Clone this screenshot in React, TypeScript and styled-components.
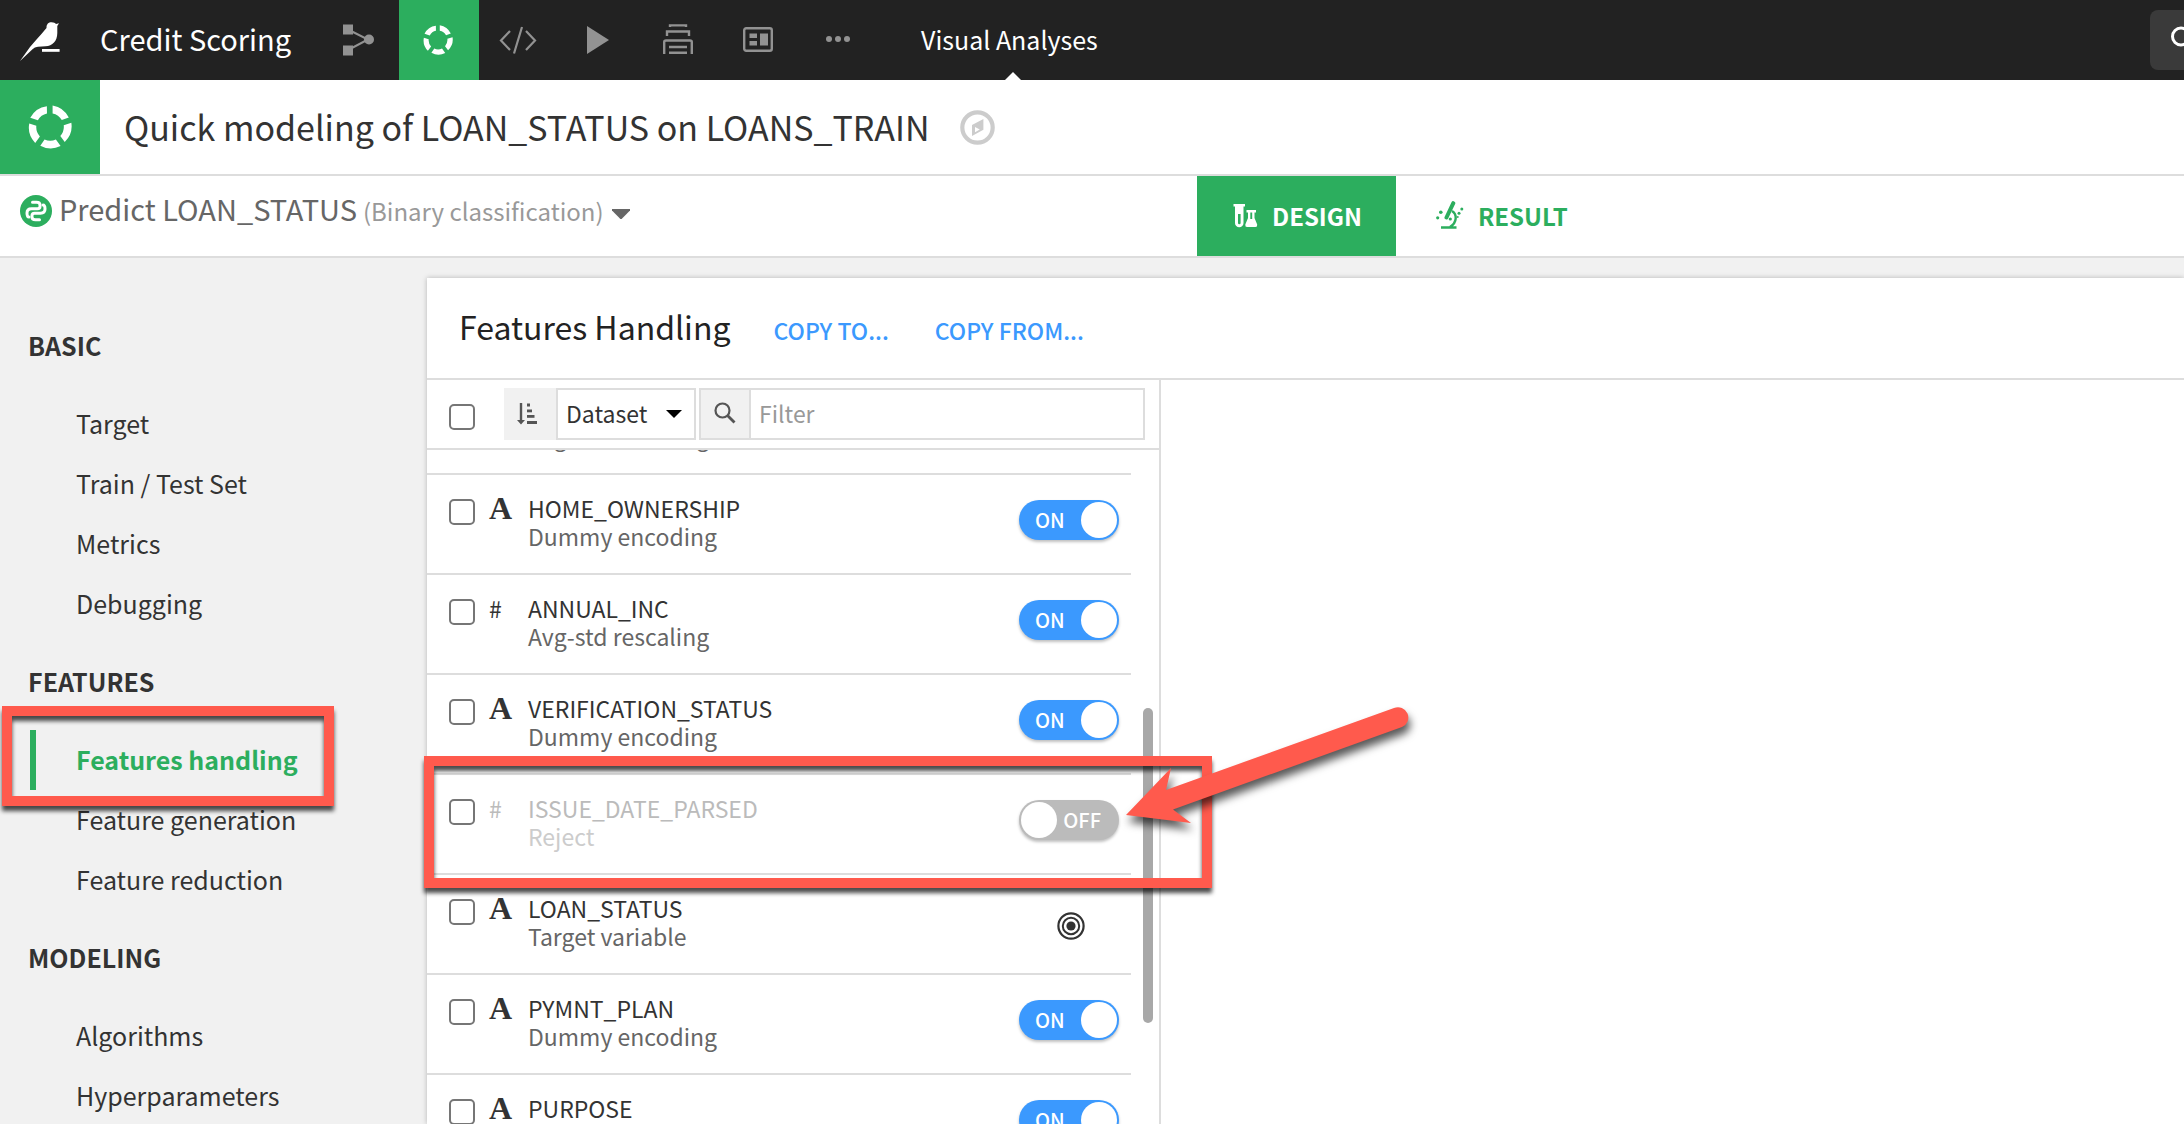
import React from "react";
import styled, { createGlobalStyle } from "styled-components";

const green = "#2cae5e";
const blue = "#3b99fe";
const line = "#dddddd";
const red = "#ff5a4d";

const GlobalStyle = createGlobalStyle`
  *, *::before, *::after { box-sizing: border-box; }
  body {
    margin: 0;
    background: #f1f1f1;
    color: #333;
    font-family: "Noto Sans CJK SC", "Source Sans Pro", sans-serif;
    font-size: 25px;
  }
  button, input, select { font: inherit; color: inherit; margin: 0; }
  h1, h2, h3, ul { margin: 0; padding: 0; font-weight: 400; list-style: none; }
`;

const Page = styled.div`
  position: relative;
  display: flex;
  flex-direction: column;
  height: 100vh;
  overflow: hidden;
`;

/* ---------- top bar ---------- */

const TopBar = styled.header`
  flex: none;
  display: flex;
  align-items: stretch;
  height: 80px;
  background: #222;
  color: #fff;
`;

const HomeLink = styled.a`
  display: flex;
  align-items: center;
  width: 100px;
  padding: 0 18px;
`;

const ProjectLink = styled.a`
  display: flex;
  align-items: center;
  width: 219px;
  padding-bottom: 4px;
  color: #fff;
  font-size: 29px;
  text-decoration: none;
  white-space: nowrap;
`;

const NavButton = styled.button<{ $active?: boolean }>`
  display: flex;
  align-items: center;
  justify-content: center;
  width: 80px;
  padding: 0 2px 0 0;
  border: 0;
  background: ${(p) => (p.$active ? green : "transparent")};
  color: ${(p) => (p.$active ? "#fff" : "#929292")};
`;

const SectionLink = styled.a`
  position: relative;
  display: flex;
  align-items: center;
  margin-left: 42px;
  padding-bottom: 2px;
  color: #fff;
  text-decoration: none;
  white-space: nowrap;
  &::after {
    content: "";
    position: absolute;
    left: 50%;
    bottom: 0;
    margin-left: -4px;
    border: 8px solid transparent;
    border-top: 0;
    border-bottom-color: #fff;
  }
`;

const SearchButton = styled.button`
  display: flex;
  align-items: center;
  align-self: center;
  width: 34px;
  height: 60px;
  margin-left: auto;
  padding: 0 0 0 20px;
  border: 0;
  border-radius: 8px 0 0 8px;
  background: #3a3a3a;
  overflow: hidden;
  svg { flex: none; }
`;

/* ---------- title and tabs ---------- */

const TitleBar = styled.div`
  flex: none;
  display: flex;
  align-items: center;
  height: 96px;
  border-bottom: 2px solid ${line};
  background: #fff;
`;

const TitleBadge = styled.div`
  display: flex;
  align-items: center;
  justify-content: center;
  align-self: stretch;
  width: 100px;
  margin-right: 24px;
  background: ${green};
  color: #fff;
`;

const Title = styled.h1`
  margin-right: 30px;
  font-size: 34px;
  line-height: 48px;
  white-space: nowrap;
`;

const IconButton = styled.button`
  display: flex;
  padding: 0;
  border: 0;
  background: none;
`;

const TabBar = styled.div`
  flex: none;
  display: flex;
  height: 82px;
  border-bottom: 2px solid ${line};
  background: #fff;
`;

const TaskArea = styled.div`
  flex: none;
  width: 1197px;
  padding-left: 20px;
`;

const TaskButton = styled.button`
  display: flex;
  align-items: center;
  height: 66px;
  padding: 0;
  border: 0;
  background: none;
  color: #666;
  font-size: 29px;
  line-height: 40px;
  white-space: nowrap;
`;

const TaskIcon = styled.span`
  display: flex;
  margin-right: 7px;
  padding-top: 4px;
`;

const TaskKind = styled.span`
  margin: 0 8px 0 6px;
  color: #999;
  font-size: 24px;
`;

const TaskCaret = styled.span`
  display: flex;
  padding-top: 10px;
`;

const Tab = styled.button<{ $active?: boolean }>`
  display: flex;
  align-items: center;
  gap: 14px;
  padding: 0 34px 2px 36px;
  border: 0;
  background: ${(p) => (p.$active ? green : "transparent")};
  color: ${(p) => (p.$active ? "#fff" : green)};
  font-size: 24px;
  font-weight: 700;
`;

/* ---------- sidebar ---------- */

const Body = styled.div`
  flex: 1;
  display: flex;
  min-height: 0;
`;

const Sidebar = styled.nav`
  flex: none;
  width: 427px;
  padding-top: 40px;
`;

const GroupTitle = styled.h2`
  height: 96px;
  padding-left: 28px;
  font-size: 25px;
  font-weight: 700;
  line-height: 94px;
`;

const SideLink = styled.a<{ $active?: boolean }>`
  display: block;
  height: 60px;
  margin-left: 30px;
  padding-left: ${(p) => (p.$active ? 40 : 46)}px;
  border-left: ${(p) => (p.$active ? `6px solid ${green}` : "0")};
  color: ${(p) => (p.$active ? green : "#333")};
  font-weight: ${(p) => (p.$active ? 700 : 400)};
  line-height: 58px;
  text-decoration: none;
`;

/* ---------- panel ---------- */

const Panel = styled.main`
  flex: 1;
  display: flex;
  flex-direction: column;
  min-width: 0;
  margin-top: 20px;
  background: #fff;
  box-shadow: 0 0 5px rgba(0, 0, 0, 0.25);
`;

const PanelHeader = styled.div`
  flex: none;
  display: flex;
  align-items: baseline;
  height: 102px;
  padding: 22px 32px;
  border-bottom: 2px solid ${line};
`;

const PanelTitle = styled.h2`
  margin-right: 43px;
  color: #222;
  font-size: 32px;
  line-height: 52px;
`;

const TextButton = styled.button`
  margin-right: 46px;
  padding: 0;
  border: 0;
  background: none;
  color: ${blue};
  font-size: 23px;
  font-weight: 500;
`;

const FeaturePane = styled.section`
  flex: 1;
  display: flex;
  flex-direction: column;
  width: 734px;
  min-height: 0;
  border-right: 2px solid ${line};
`;

const Toolbar = styled.div`
  flex: none;
  display: flex;
  height: 70px;
  padding: 8px 14px 8px 22px;
  border-bottom: 2px solid ${line};
  font-size: 23px;
`;

const Check = styled.input<{ $top: number }>`
  appearance: none;
  flex: none;
  width: 26px;
  height: 26px;
  margin: ${(p) => p.$top}px 0 0;
  border: 2px solid #767676;
  border-radius: 5px;
  background: #fff;
`;

const SortButton = styled.button`
  display: flex;
  align-items: center;
  width: 52px;
  height: 52px;
  margin-left: 29px;
  padding: 0 0 0 13px;
  border: 0;
  background: #f1f1f1;
`;

const SelectWrap = styled.div`
  position: relative;
  width: 140px;
  margin-right: 3px;
  svg {
    position: absolute;
    top: 22px;
    right: 14px;
    pointer-events: none;
  }
`;

const SortSelect = styled.select`
  appearance: none;
  width: 100%;
  height: 52px;
  padding: 0 30px 2px 8px;
  border: 2px solid ${line};
  border-radius: 0;
  background: #fff;
`;

const SearchField = styled.label`
  flex: 1;
  display: flex;
  height: 52px;
  border: 2px solid ${line};
`;

const SearchPrefix = styled.span`
  display: flex;
  justify-content: center;
  width: 50px;
  padding-top: 12px;
  border-right: 2px solid ${line};
  background: #f1f1f1;
`;

const SearchInput = styled.input`
  flex: 1;
  min-width: 0;
  padding: 0 8px 2px;
  border: 0;
  background: #fff;
  &::placeholder { color: #999; opacity: 1; }
`;

const ListViewport = styled.div`
  position: relative;
  flex: 1;
  min-height: 0;
  overflow: hidden;
`;

const FeatureList = styled.ul`
  width: 704px;
  margin-top: -75px;
`;

const ScrollThumb = styled.div`
  position: absolute;
  top: 258px;
  right: 6px;
  width: 10px;
  height: 315px;
  border-radius: 5px;
  background: #a8a8a8;
`;

const Row = styled.li`
  display: flex;
  align-items: flex-start;
  height: 100px;
  padding: 19px 12px 0 22px;
  border-bottom: 2px solid ${line};
  font-size: 23px;
  line-height: 28px;
`;

const TypeMark = styled.span<{ $text: boolean; $off: boolean }>`
  width: 39px;
  margin-left: 14px;
  color: ${(p) => (p.$off ? "#bbb" : "#333")};
  ${(p) => (p.$text ? 'font: 700 32px/28px "Liberation Serif", serif;' : "")}
`;

const Labels = styled.div<{ $off: boolean }>`
  flex: 1;
  color: ${(p) => (p.$off ? "#bbb" : "#333")};
`;

const FeatureName = styled.h3`
  height: 28px;
  font-size: 23px;
`;

const Handling = styled.div<{ $off: boolean }>`
  color: ${(p) => (p.$off ? "#ccc" : "#666")};
`;

const Toggle = styled.label<{ $on: boolean }>`
  position: relative;
  display: flex;
  flex-direction: ${(p) => (p.$on ? "row" : "row-reverse")};
  align-items: center;
  justify-content: space-between;
  width: 100px;
  height: 40px;
  margin-top: 6px;
  padding: ${(p) => (p.$on ? "0 2px 0 16px" : "0 18px 0 2px")};
  border-radius: 20px;
  background: ${(p) => (p.$on ? blue : "#bbb")};
  box-shadow: 0 2px 3px rgba(0, 0, 0, 0.25);
  color: #fff;
  font-size: 20px;
  font-weight: 500;
  input {
    position: absolute;
    inset: 0;
    width: 100%;
    height: 100%;
    opacity: 0;
  }
`;

const Knob = styled.span`
  flex: none;
  width: 36px;
  height: 36px;
  border-radius: 50%;
  background: #fff;
`;

const TargetMark = styled.span`
  display: flex;
  margin: 18px 34px 0 0;
`;

/* ---------- call-outs drawn over the page ---------- */

const Callout = styled.div<{ $x: number; $y: number; $w: number; $h: number }>`
  position: absolute;
  left: ${(p) => p.$x}px;
  top: ${(p) => p.$y}px;
  width: ${(p) => p.$w}px;
  height: ${(p) => p.$h}px;
  border: 10px solid ${red};
  filter: drop-shadow(0 5px 2px rgba(0, 0, 0, 0.7));
  pointer-events: none;
`;

const Arrow = styled.svg`
  position: absolute;
  left: 1120px;
  top: 700px;
  filter: drop-shadow(2px 7px 4px rgba(0, 0, 0, 0.65));
  pointer-events: none;
`;

/* ---------- icons ---------- */

const Bird = () => (
  <svg width="42" height="42" viewBox="0 0 42 42" fill="#fff">
    <path d="M2 42 L12 28 L18.500 20.500 Q24 14.500 28.500 9 C28.500 5 30.500 3.300 33.500 3.300 C36 3.300 37 4 38 5 L41 4.300 L39.300 7 L39.300 14 C39.300 22 34.500 27 27.500 27.300 L20 27.800 Q16.500 28 14.500 30.300 Z" />
    <rect x="24" y="30" width="17.600" height="2.800" />
  </svg>
);

const Ring = ({ size }: { size: number }) => (
  <svg width={size} height={size} viewBox="-22 -22 44 44">
    {[0, 72, 144, 216, 288].map((a) => (
      <path
        key={a}
        transform={`rotate(${a})`}
        fill="currentColor"
        d="M2.600 -21.600 A21.800 21.800 0 0 1 18.800 -9.400 L11.800 -7 A13.800 13.800 0 0 0 2.600 -13.600 Z"
      />
    ))}
  </svg>
);

const Flow = () => (
  <svg width="32" height="32" viewBox="0 0 32 32" fill="currentColor">
    <rect x="1" y="0.500" width="10" height="10" />
    <rect x="1" y="21.500" width="10" height="10" />
    <circle cx="27" cy="15.500" r="5" />
    <path d="M8 6.500 L26 15.500 L8 25" fill="none" stroke="currentColor" strokeWidth="2" />
  </svg>
);

const Code = () => (
  <svg width="38" height="30" viewBox="0 0 38 30" fill="none" stroke="currentColor" strokeWidth="2.200">
    <path d="M11 6 L2 15.500 L11 25 M27 6 L36 15.500 L27 25 M23 2 L15 28.500" />
  </svg>
);

const Play = () => (
  <svg width="22" height="28" viewBox="0 0 22 28" fill="currentColor">
    <path d="M0 0 L22 14 L0 28 Z" />
  </svg>
);

const Stack = () => (
  <svg width="30" height="32" viewBox="0 0 30 32" fill="none" stroke="currentColor" strokeWidth="2.400">
    <path d="M7 3 V1.400 H23 V3 M4 12 V7.500 H26 V12 M1.200 30 V18 Q1.200 16.500 3 16.500 H27 Q28.800 16.500 28.800 18 V30 M6 23 H24 M6 28.800 H24" />
  </svg>
);

const Board = () => (
  <svg width="30" height="26" viewBox="0 0 30 26" fill="currentColor">
    <rect x="1.200" y="1.200" width="27.600" height="22.600" rx="2" fill="none" stroke="currentColor" strokeWidth="2.400" />
    <rect x="6.500" y="6.500" width="7.500" height="4.500" />
    <rect x="6.500" y="14" width="7.500" height="4.500" />
    <rect x="17" y="6.500" width="8" height="12" />
  </svg>
);

const Dots = () => (
  <svg width="24" height="8" viewBox="0 0 24 8" fill="currentColor">
    <circle cx="3" cy="3" r="3" />
    <circle cx="12" cy="3" r="3" />
    <circle cx="21" cy="3" r="3" />
  </svg>
);

const Lens = () => (
  <svg width="30" height="30" viewBox="0 0 30 30" fill="none" stroke="#fff" strokeWidth="3">
    <circle cx="11" cy="11.500" r="8.500" />
    <path d="M17 18 L26 27" />
  </svg>
);

const Compass = () => (
  <svg width="35" height="35" viewBox="0 0 35 35">
    <circle cx="17.500" cy="17.500" r="15.200" fill="none" stroke="#ccc" strokeWidth="4.200" />
    <path
      d="M23.400 9 V19.700 L12 26 V15 Z M15 17 V22.200 L19.800 19.500 Z"
      fill="#ccc"
      fillRule="evenodd"
    />
  </svg>
);

const PythonBadge = () => {
  const d = "M-3.500 -8.800 H0.500 Q4 -8.800 4 -6 V-4.500 Q4 -2.200 1.500 -2.200 H-4.500 Q-9 -2.200 -9 2 Q-9 6 -7 6";
  return (
    <svg width="32" height="32" viewBox="-16 -16 32 32">
      <circle r="16" fill={green} />
      <g fill="none" stroke="#fff" strokeWidth="3" strokeLinecap="round">
        <path d={d} />
        <path d={d} transform="rotate(180)" />
      </g>
    </svg>
  );
};

const Caret = ({ color }: { color: string }) => (
  <svg width="18" height="10" viewBox="0 0 18 10">
    <path d="M0 0 H18 V1.500 L9.600 10 H8.400 L0 1.500 Z" fill={color} />
  </svg>
);

const SelectCaret = () => (
  <svg width="16" height="8" viewBox="0 0 16 8">
    <path d="M0 0 H16 L8 8 Z" fill="#000" />
  </svg>
);

const Tubes = () => (
  <svg width="25" height="25" viewBox="0 0 25 25" fill="currentColor">
    <path
      fillRule="evenodd"
      d="M0.500 1 H12 V3.500 H10.500 V20 A4.200 4.200 0 0 1 2 20 V3.500 H0.500 Z M5 11 V20 A1.300 1.300 0 0 0 7.600 20 V11 Z"
    />
    <path
      fillRule="evenodd"
      d="M13.500 7 H23 V9.400 H21.500 V15 L24.200 21.500 Q24.500 24 22.500 24 H14 Q12 24 12.300 21.500 L15 15 V9.400 H13.500 Z M17.300 9.600 V16 H19.200 V9.600 Z"
    />
  </svg>
);

const Microscope = () => (
  <svg width="32" height="28" viewBox="-4 0 32 28" fill="none" stroke="currentColor" strokeWidth="2.400">
    <path d="M17.300 2.200 L10.500 16.500" strokeWidth="4" strokeLinecap="round" />
    <path d="M16 10 C21 13 21.500 21.500 14 26 M5 26.500 H20.500" />
    <g fill="currentColor" stroke="none">
      <circle cx="14.300" cy="18" r="1.600" />
      <circle cx="4.800" cy="11.300" r="1.800" />
      <circle cx="1.700" cy="16.800" r="1.600" />
      <circle cx="25.800" cy="8" r="1.500" />
      <circle cx="23" cy="12.300" r="1.500" />
      <circle cx="21.800" cy="16" r="0.900" />
    </g>
  </svg>
);

const SortIcon = () => (
  <svg width="20" height="22" viewBox="0 0 20 22" fill="#555">
    <path d="M2.800 0 H5.200 V17 H8 L4 21.500 L0 17 H2.800 Z" />
    <rect x="10" y="0.500" width="3" height="3" />
    <rect x="10" y="6.500" width="5" height="2.800" />
    <rect x="10" y="12" width="7.500" height="2.800" />
    <rect x="10" y="18" width="10" height="3" />
  </svg>
);

const FilterIcon = () => (
  <svg width="22" height="22" viewBox="0 0 22 22" fill="none" stroke="#555" strokeWidth="2.200">
    <circle cx="8.500" cy="8.500" r="7" />
    <path d="M13.500 13.500 L20.500 20.500" strokeWidth="2.800" />
  </svg>
);

const Bullseye = () => (
  <svg width="28" height="28" viewBox="-14 -14 28 28">
    <circle r="12.600" fill="none" stroke="#333" strokeWidth="2.200" />
    <circle r="8.200" fill="none" stroke="#333" strokeWidth="2" />
    <circle r="4.600" fill="#333" />
  </svg>
);

/* ---------- data ---------- */

const groups = [
  { title: "BASIC", items: ["Target", "Train / Test Set", "Metrics", "Debugging"] },
  { title: "FEATURES", items: ["Features handling", "Feature generation", "Feature reduction"] },
  { title: "MODELING", items: ["Algorithms", "Hyperparameters"] },
];

type Feature = { name: string; handling: string; text: boolean; role: "on" | "off" | "target" };

const features: Feature[] = [
  { name: "", handling: "Avg-std rescaling", text: false, role: "on" },
  { name: "HOME_OWNERSHIP", handling: "Dummy encoding", text: true, role: "on" },
  { name: "ANNUAL_INC", handling: "Avg-std rescaling", text: false, role: "on" },
  { name: "VERIFICATION_STATUS", handling: "Dummy encoding", text: true, role: "on" },
  { name: "ISSUE_DATE_PARSED", handling: "Reject", text: false, role: "off" },
  { name: "LOAN_STATUS", handling: "Target variable", text: true, role: "target" },
  { name: "PYMNT_PLAN", handling: "Dummy encoding", text: true, role: "on" },
  { name: "PURPOSE", handling: "", text: true, role: "on" },
];

const FeatureRow = ({ feature }: { feature: Feature }) => {
  const { name, handling, text, role } = feature;
  const off = role === "off";
  const whole = name !== "";
  return (
    <Row>
      <Check $top={5} type="checkbox" aria-label={`Select ${name}`} />
      <TypeMark $text={text} $off={off}>{whole && (text ? "A" : "#")}</TypeMark>
      <Labels $off={off}>
        <FeatureName>{name}</FeatureName>
        <Handling $off={off}>{handling}</Handling>
      </Labels>
      {role === "target" && <TargetMark><Bullseye /></TargetMark>}
      {role !== "target" && whole && (
        <Toggle $on={!off}>
          <input type="checkbox" role="switch" defaultChecked={!off} aria-label={`Use ${name}`} />
          <span>{off ? "OFF" : "ON"}</span>
          <Knob />
        </Toggle>
      )}
    </Row>
  );
};

export default function App() {
  return (
    <Page>
      <GlobalStyle />
      <TopBar>
        <HomeLink href="#" aria-label="Home"><Bird /></HomeLink>
        <ProjectLink href="#">Credit Scoring</ProjectLink>
        <NavButton aria-label="Flow"><Flow /></NavButton>
        <NavButton $active aria-label="Analyses"><Ring size={30} /></NavButton>
        <NavButton aria-label="Code"><Code /></NavButton>
        <NavButton aria-label="Jobs"><Play /></NavButton>
        <NavButton aria-label="Deployer"><Stack /></NavButton>
        <NavButton aria-label="Dashboards"><Board /></NavButton>
        <NavButton aria-label="More"><Dots /></NavButton>
        <SectionLink href="#">Visual Analyses</SectionLink>
        <SearchButton aria-label="Search"><Lens /></SearchButton>
      </TopBar>

      <TitleBar>
        <TitleBadge><Ring size={44} /></TitleBadge>
        <Title>Quick modeling of LOAN_STATUS on LOANS_TRAIN</Title>
        <IconButton aria-label="Navigate"><Compass /></IconButton>
      </TitleBar>

      <TabBar>
        <TaskArea>
          <TaskButton>
            <TaskIcon><PythonBadge /></TaskIcon>
            <span>Predict LOAN_STATUS<TaskKind>(Binary classification)</TaskKind></span>
            <TaskCaret><Caret color="#666" /></TaskCaret>
          </TaskButton>
        </TaskArea>
        <Tab $active><Tubes />DESIGN</Tab>
        <Tab><Microscope />RESULT</Tab>
      </TabBar>

      <Body>
        <Sidebar>
          {groups.map((g) => (
            <section key={g.title}>
              <GroupTitle>{g.title}</GroupTitle>
              {g.items.map((item) => (
                <SideLink key={item} href="#" $active={item === "Features handling"}>{item}</SideLink>
              ))}
            </section>
          ))}
        </Sidebar>

        <Panel>
          <PanelHeader>
            <PanelTitle>Features Handling</PanelTitle>
            <TextButton>COPY TO...</TextButton>
            <TextButton>COPY FROM...</TextButton>
          </PanelHeader>
          <FeaturePane>
            <Toolbar>
              <Check $top={16} type="checkbox" aria-label="Select all" />
              <SortButton aria-label="Sort order"><SortIcon /></SortButton>
              <SelectWrap>
                <SortSelect aria-label="Sort by"><option>Dataset</option></SortSelect>
                <SelectCaret />
              </SelectWrap>
              <SearchField>
                <SearchPrefix><FilterIcon /></SearchPrefix>
                <SearchInput type="text" placeholder="Filter" aria-label="Filter" />
              </SearchField>
            </Toolbar>
            <ListViewport>
              <FeatureList>
                {features.map((f, i) => <FeatureRow key={i} feature={f} />)}
              </FeatureList>
              <ScrollThumb />
            </ListViewport>
          </FeaturePane>
        </Panel>
      </Body>

      <Callout $x={2} $y={706} $w={332} $h={100} />
      <Callout $x={424} $y={756} $w={788} $h={132} />
      <Arrow width="300" height="150" viewBox="0 0 300 150">
        <path
          fill={red}
          d="M6 115 L51 68 L46 90 L274 8 A10.300 10.300 0 0 1 282 27 L53 109.500 L71 123 Z"
        />
      </Arrow>
    </Page>
  );
}
